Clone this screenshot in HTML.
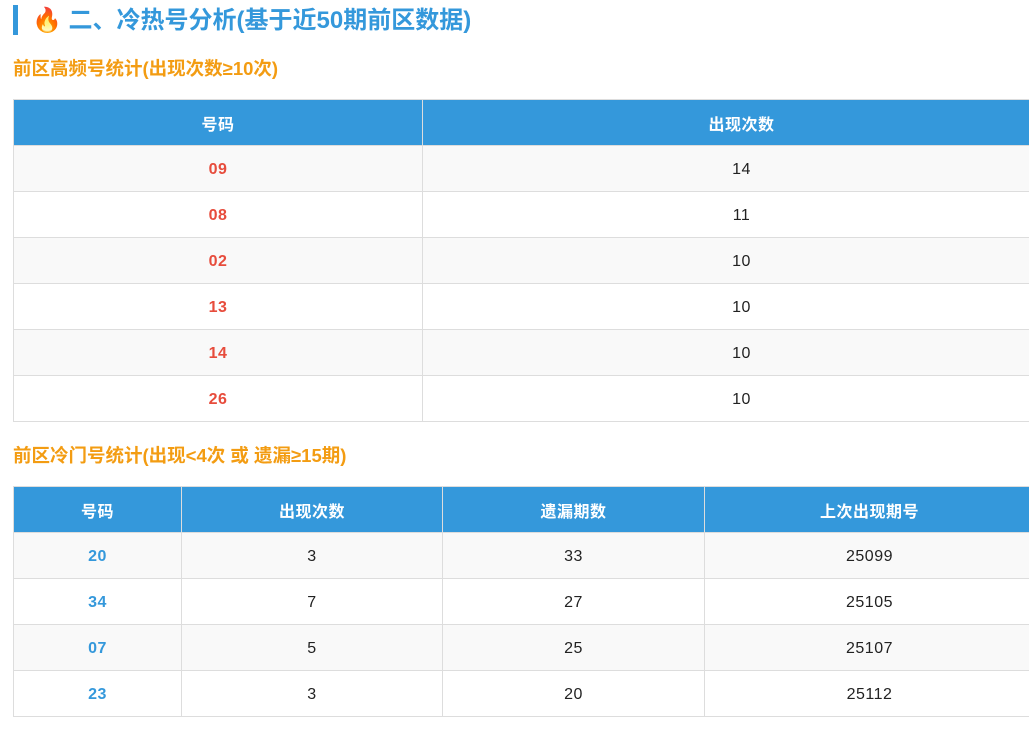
<!DOCTYPE html>
<html><head><meta charset="utf-8"><style>
body{margin:0;width:1029px;height:729px;overflow:hidden;background:#fff;font-family:"Liberation Sans","Noto Sans CJK SC",sans-serif;}
h2{position:absolute;left:13px;top:5px;margin:0;height:30px;border-left:5px solid #3498db;padding-left:14px;font-size:24px;line-height:32px;color:#3498db;font-weight:bold;white-space:nowrap;}
h3{position:absolute;left:13px;margin:0;font-size:18.5px;line-height:24px;color:#f39c12;font-weight:bold;white-space:nowrap;}
table{position:absolute;left:13px;border-collapse:collapse;table-layout:fixed;font-size:16px;letter-spacing:0.5px;}
th{background:#3498db;color:#fff;font-weight:bold;height:45px;border:1px solid #ddd;padding:0;}
td{height:42px;border:1px solid #ddd;text-align:center;padding:3px 0 0;color:#222;}
tr:nth-child(even) td{background:#f9f9f9;}
.r{color:#e74c3c;font-weight:bold}.b{color:#3498db;font-weight:bold}
</style></head><body>
<h2>🔥 二、冷热号分析(基于近50期前区数据)</h2>
<h3 style="top:57px">前区高频号统计(出现次数≥10次)</h3>
<table style="top:99px;width:1047px">
<colgroup><col style="width:409px"><col style="width:638px"></colgroup>
<tr><th>号码</th><th>出现次数</th></tr>
<tr><td class="r">09</td><td>14</td></tr>
<tr><td class="r">08</td><td>11</td></tr>
<tr><td class="r">02</td><td>10</td></tr>
<tr><td class="r">13</td><td>10</td></tr>
<tr><td class="r">14</td><td>10</td></tr>
<tr><td class="r">26</td><td>10</td></tr>
</table>
<h3 style="top:444px">前区冷门号统计(出现&lt;4次 或 遗漏≥15期)</h3>
<table style="top:486px;width:1021px">
<colgroup><col style="width:168px"><col style="width:261px"><col style="width:262px"><col style="width:330px"></colgroup>
<tr><th>号码</th><th>出现次数</th><th>遗漏期数</th><th>上次出现期号</th></tr>
<tr><td class="b">20</td><td>3</td><td>33</td><td>25099</td></tr>
<tr><td class="b">34</td><td>7</td><td>27</td><td>25105</td></tr>
<tr><td class="b">07</td><td>5</td><td>25</td><td>25107</td></tr>
<tr><td class="b">23</td><td>3</td><td>20</td><td>25112</td></tr>
</table>
</body></html>
